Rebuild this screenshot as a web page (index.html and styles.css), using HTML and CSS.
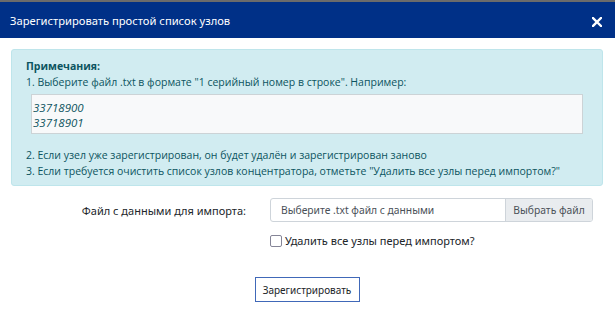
FILE: index.html
```html
<!DOCTYPE html>
<html lang="ru">
<head>
  <meta charset="UTF-8" />
  <title>Зарегистрировать простой список узлов</title>
  <link rel="stylesheet" href="styles.css">
</head>
<body>
  <div class="modal">
    <div class="modal-header">
      <span class="modal-title">Зарегистрировать простой список узлов</span>
      <button class="close" aria-label="Закрыть">
        <svg width="10" height="10" viewBox="0 0 10 10"><path d="M1 1L9 9M9 1L1 9" stroke="#fff" stroke-width="2.4" stroke-linecap="square"/></svg>
      </button>
    </div>

    <div class="modal-body">
      <div class="alert">
        <div class="alert-title">Примечания:</div>
        <div>1. Выберите файл .txt в формате "1 серийный номер в строке". Например:</div>
        <pre class="sample">33718900
33718901</pre>
        <div>2. Если узел уже зарегистрирован, он будет удалён и зарегистрирован заново</div>
        <div>3. Если требуется очистить список узлов концентратора, отметьте "Удалить все узлы перед импортом?"</div>
      </div>

      <div class="form-row">
        <label class="form-label">Файл с данными для импорта:</label>
        <div class="file-input">
          <span class="file-name">Выберите .txt файл с данными</span>
          <span class="file-btn">Выбрать файл</span>
        </div>
      </div>

      <div class="form-row check-row">
        <div class="form-label"></div>
        <label class="check"><span class="box"></span>Удалить все узлы перед импортом?</label>
      </div>

      <div class="actions">
        <button class="submit">Зарегистрировать</button>
      </div>
    </div>
  </div>
</body>
</html>
```

FILE: styles.css
```css
body {
  margin: 0;
  background: #fff;
  font-family: "Noto Sans", "Open Sans", sans-serif;
  color: #212529;
}
.modal {
  width: 615px;
  height: 314px;
  overflow: hidden;
}
.modal-header {
  background: #003087;
  border-top: 2px solid #6b6b6b;
  height: 36px;
  display: flex;
  align-items: center;
  justify-content: space-between;
  padding: 0 13px 0 10px;
}
.modal-title {
  color: #fff;
  font-size: 11.2px;
}
.close {
  background: none;
  border: none;
  padding: 0;
  cursor: pointer;
  display: flex;
  margin-top: 4px;
}
.modal-body {
  padding: 11px 12px 0 11px;
}
.alert {
  background: #d1ecf1;
  border: 1px solid #bee5eb;
  border-radius: 3px;
  color: #0c5460;
  font-family: "Open Sans", sans-serif;
  font-size: 10.5px;
  line-height: 16px;
  padding: 8px 14px 6px 14px;
}
.alert-title {
  font-weight: 700;
}
.sample {
  margin: 4px 5px 13px 5px;
  background: #f8f9fa;
  border: 1px solid #ccd3d6;
  font-family: "Open Sans", sans-serif;
  font-style: italic;
  font-size: 11.5px;
  line-height: 15px;
  color: #0c5460;
  padding: 5px 1px 3px;
}
.form-row {
  display: flex;
  align-items: center;
  margin-top: 12px;
}
.form-label {
  width: 235px;
  text-align: right;
  font-size: 11px;
  color: #212529;
  padding-right: 24px;
}
.file-input {
  display: flex;
  width: 323px;
  height: 24px;
  border: 1px solid #ced4da;
  border-radius: 3px;
  box-sizing: border-box;
  font-size: 10.3px;
  overflow: hidden;
}
.file-name {
  flex: 1;
  padding-left: 10px;
  display: flex;
  align-items: center;
  color: #495057;
}
.file-btn {
  background: #e9ecef;
  border-left: 1px solid #ced4da;
  width: 86px;
  justify-content: center;
  display: flex;
  align-items: center;
  color: #495057;
}
.check-row {
  margin-top: 11px;
}
.check {
  display: flex;
  align-items: center;
  font-size: 11px;
  color: #212529;
}
.box {
  width: 10px;
  height: 10px;
  border: 1px solid #858597;
  border-radius: 2px;
  margin-right: 3px;
}
.actions {
  display: flex;
  justify-content: center;
  margin-top: 29px;
}
.submit {
  background: #fff;
  border: 1px solid #4068b8;
  font-family: "Noto Sans", sans-serif;
  font-size: 10px;
  color: #212529;
  width: 105px;
  height: 25px;
  padding: 0;
  cursor: pointer;
}
```
